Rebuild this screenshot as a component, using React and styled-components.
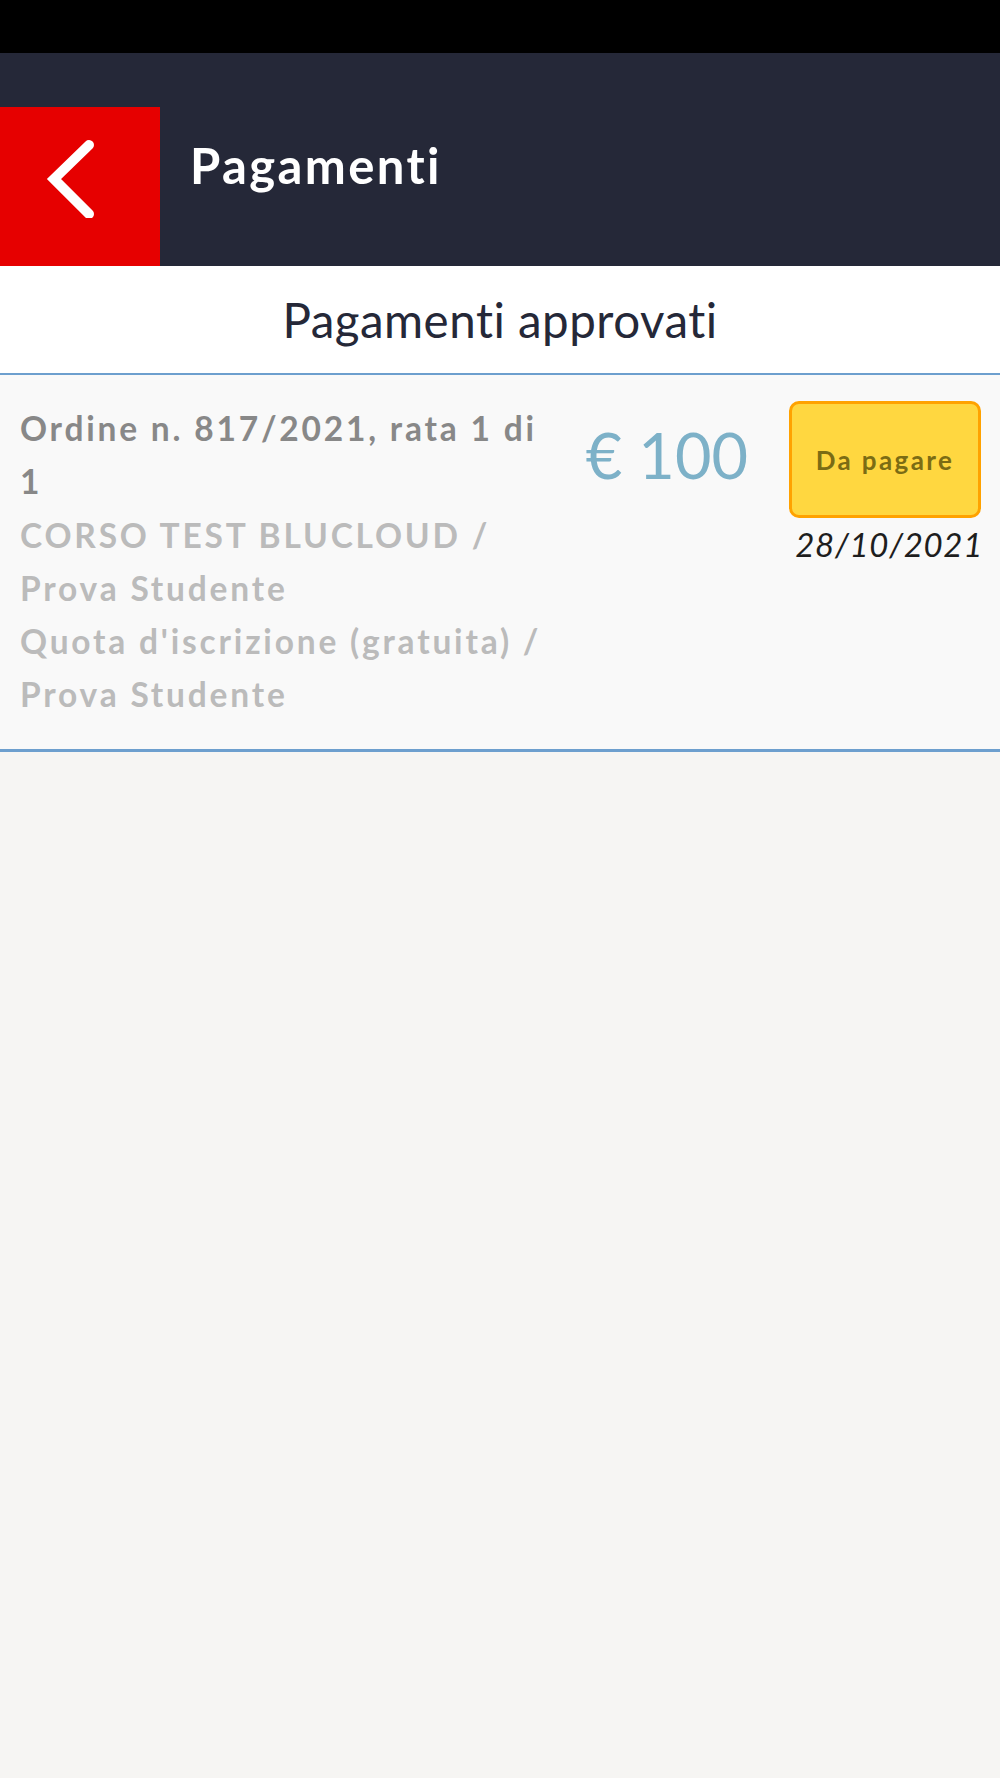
import React from "react";
import styled, { createGlobalStyle } from "styled-components";

const Global = createGlobalStyle`
  html, body { margin: 0; padding: 0; }
  body { background: #f6f5f3; font-family: Lato, "Noto Sans", sans-serif; }
  * { box-sizing: border-box; }
`;

const Page = styled.div`
  min-height: 100vh;
  display: flex;
  flex-direction: column;
  background: #f6f5f3;
`;

const StatusBar = styled.div`
  height: 53px;
  background: #000;
`;

const Header = styled.header`
  height: 213px;
  background: #252838;
  display: flex;
  align-items: flex-start;
  padding-top: 54px;
`;

const BackButton = styled.button`
  width: 160px;
  height: 159px;
  background: #e60000;
  border: none;
  padding: 0;
  display: flex;
  align-items: center;
  justify-content: center;
  cursor: pointer;
  svg { display: block; margin-left: -16px; margin-top: -28px; }
`;

const Title = styled.h1`
  margin: 0 0 0 30px;
  padding-top: 29px;
  color: #fff;
  font-family: Lato, sans-serif;
  font-weight: 700;
  font-size: 49px;
  line-height: 1.2;
  letter-spacing: 2.4px;
`;

const SubHeader = styled.div`
  height: 109px;
  background: #fff;
  border-bottom: 2px solid #6d9fce;
  display: flex;
  align-items: center;
  justify-content: center;
  color: #252838;
  font-family: Lato, sans-serif;
  font-size: 47.5px;
  font-weight: 400;
  line-height: 1.2;
  letter-spacing: 0.5px;
`;

const Card = styled.div`
  background: #f9f9f9;
  border-bottom: 3px solid #6d9fce;
  display: flex;
  align-items: flex-start;
  padding: 27px 19px 27px 20px;
`;

const Info = styled.div`
  width: 532px;
  font-family: Lato, sans-serif;
  font-size: 33.5px;
  line-height: 53.3px;
  letter-spacing: 2.8px;
  font-weight: 700;
`;

const Line = styled.div`
  color: ${(p) => (p.$strong ? "#888888" : "#bbbbbb")};
`;

const Amount = styled.div`
  margin-left: auto;
  padding-top: 15px;
  color: #7db1c8;
  font-family: Lato, sans-serif;
  font-size: 63px;
  font-weight: 400;
  line-height: 1.2;
  white-space: nowrap;
`;

const Side = styled.div`
  margin-left: 41px;
  margin-top: -1px;
  display: flex;
  flex-direction: column;
  align-items: flex-end;
`;

const Badge = styled.div`
  width: 192px;
  height: 117px;
  background: #ffd740;
  border: 3px solid #ffa200;
  border-radius: 10px;
  display: flex;
  align-items: center;
  justify-content: center;
  color: #7b6c14;
  font-family: Lato, sans-serif;
  font-weight: 700;
  font-size: 26px;
  letter-spacing: 2.4px;
`;

const DateText = styled.div`
  margin-top: 7px;
  margin-right: -2px;
  color: #1e1e1e;
  font-family: Lato, sans-serif;
  font-style: italic;
  font-size: 33px;
  line-height: 1.2;
  letter-spacing: 0.7px;
`;

const Chevron = () => (
  <svg width="60" height="90" viewBox="0 0 60 90">
    <polyline
      points="47,17 12,51 47,86"
      fill="none"
      stroke="#fff"
      strokeWidth="10"
      strokeLinecap="round"
      strokeLinejoin="miter"
    />
  </svg>
);

export default function App() {
  return (
    <Page>
      <Global />
      <StatusBar />
      <Header>
        <BackButton aria-label="Indietro">
          <Chevron />
        </BackButton>
        <Title>Pagamenti</Title>
      </Header>
      <SubHeader>Pagamenti approvati</SubHeader>
      <Card>
        <Info>
          <Line $strong>Ordine n. 817/2021, rata 1 di 1</Line>
          <Line>CORSO TEST BLUCLOUD / Prova Studente</Line>
          <Line>Quota d'iscrizione (gratuita) / Prova Studente</Line>
        </Info>
        <Amount>€ 100</Amount>
        <Side>
          <Badge>Da pagare</Badge>
          <DateText>28/10/2021</DateText>
        </Side>
      </Card>
    </Page>
  );
}
